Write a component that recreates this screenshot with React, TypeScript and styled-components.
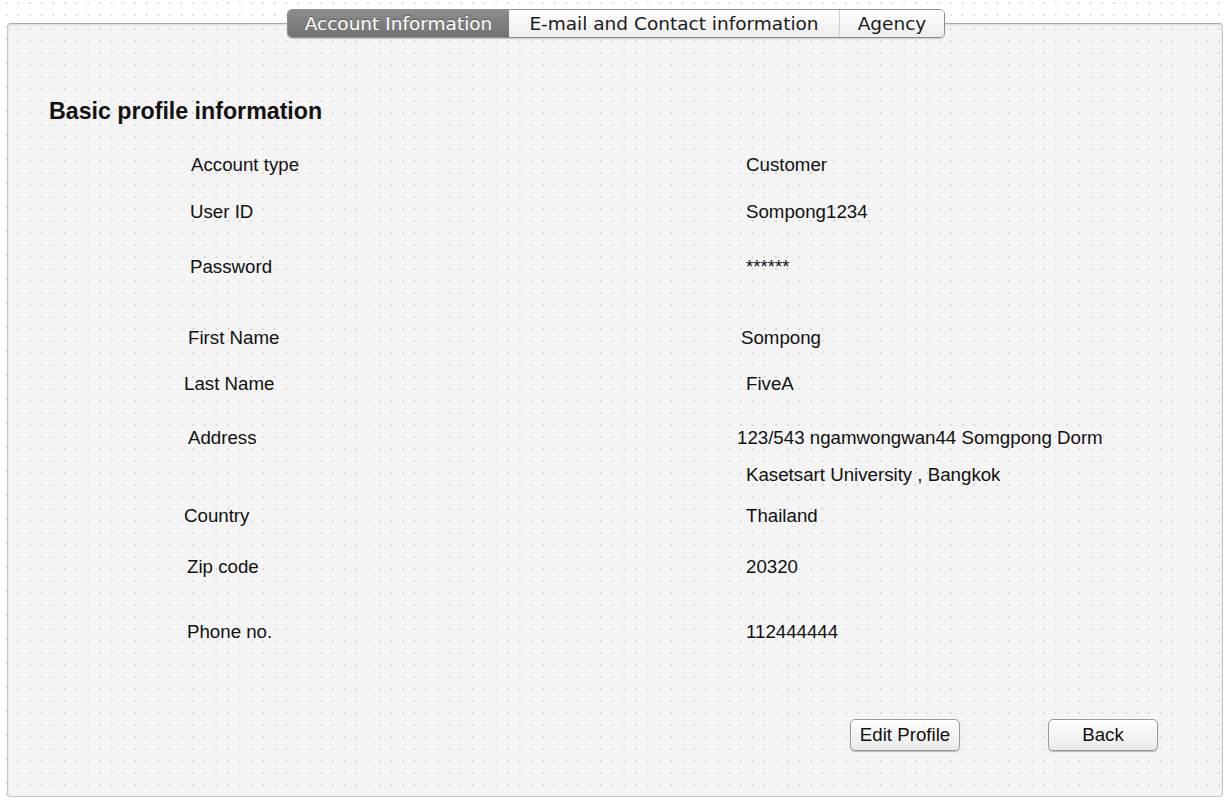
import React from "react";
import styled, { createGlobalStyle } from "styled-components";

const dots = (color: string) =>
  `radial-gradient(ellipse 0.7px 1.3px at 50% 50%, ${color} 0, ${color} 70%, transparent 100%)`;

const GlobalStyle = createGlobalStyle`
  html, body {
    margin: 0;
    padding: 0;
  }
  body {
    background-color: #ffffff;
    background-image: ${dots("#d2d2d2")};
    background-size: 11.67px 12px;
    background-position: 12.5px 9px;
    font-family: "Liberation Sans", Arial, Helvetica, sans-serif;
    color: #111;
  }
`;

const Page = styled.div`
  box-sizing: border-box;
  height: 800px;
  padding: 9px 5px 0 7px;
  display: flex;
  flex-direction: column;
`;

const TabBar = styled.div`
  position: relative;
  z-index: 1;
  align-self: center;
  margin-left: 2px;
  display: flex;
  height: 29px;
  margin-bottom: -15px;
  border: 1px solid #8f8f8f;
  border-radius: 5px;
  overflow: hidden;
  box-sizing: border-box;
  box-shadow: 0 1px 1px rgba(0, 0, 0, 0.18);
`;

const Tab = styled.div<{ $active?: boolean; $w: number; $sep?: boolean }>`
  width: ${(p) => p.$w}px;
  box-sizing: border-box;
  display: flex;
  align-items: center;
  justify-content: center;
  font-family: "DejaVu Sans", Verdana, sans-serif;
  font-size: 18.5px;
  letter-spacing: 0;
  border-left: ${(p) => (p.$sep ? "1px solid #cfcfcf" : "none")};
  color: ${(p) => (p.$active ? "#ffffff" : "#1a1a1a")};
  text-shadow: ${(p) => (p.$active ? "0 -1px 0 rgba(0,0,0,0.35)" : "none")};
  background: ${(p) =>
    p.$active
      ? "linear-gradient(#8c8c8c, #727272)"
      : "linear-gradient(#fefefe, #ededed)"};
`;

const Panel = styled.div`
  box-sizing: border-box;
  height: 774px;
  border: 1px solid #c6c6c6;
  border-top-color: #a8a8a8;
  border-radius: 4px;
  background-color: #f4f4f4;
  background-image: ${dots("#cdcdcd")};
  background-size: 11.67px 12px;
  background-position: 4.5px -1px;
  box-shadow: inset 0 1px 2px rgba(0, 0, 0, 0.12);
  display: flex;
  flex-direction: column;
  padding: 73px 64px 45px 41px;
`;

const Heading = styled.h2`
  margin: 0;
  font-size: 23.2px;
  line-height: 28px;
  font-weight: bold;
  color: #111;
`;

const Fields = styled.div`
  margin-top: 30px;
  display: flex;
  flex-direction: column;
`;

const Row = styled.div<{ $h: number }>`
  height: ${(p) => p.$h}px;
  display: grid;
  grid-template-columns: 559px 1fr;
  padding-left: 138px;
  font-size: 18.7px;
  line-height: 20px;
`;

const Label = styled.div<{ $dx?: number }>`
  margin-left: ${(p) => p.$dx ?? 0}px;
  white-space: nowrap;
`;

const Value = styled.div<{ $dx?: number }>`
  margin-left: ${(p) => p.$dx ?? 0}px;
  white-space: nowrap;
`;

const ButtonRow = styled.div`
  margin-top: auto;
  display: flex;
  justify-content: flex-end;
  gap: 88px;
`;

const Button = styled.button`
  width: 110px;
  height: 32px;
  box-sizing: border-box;
  border: 1px solid #9a9a9a;
  border-radius: 5px;
  background: linear-gradient(#ffffff, #e9e9e9);
  box-shadow: 0 1px 1px rgba(0, 0, 0, 0.25);
  font-family: "Liberation Sans", Arial, sans-serif;
  font-size: 18.7px;
  color: #111;
  padding: 0;
`;

type Field = { label: string; value: string; h: number; ldx?: number; vdx?: number };

const fields: Field[] = [
  { label: "Account type", value: "Customer", h: 46.5, ldx: 4 },
  { label: "User ID", value: "Sompong1234", h: 55, ldx: 3 },
  { label: "Password", value: "******", h: 71, ldx: 3 },
  { label: "First Name", value: "Sompong", h: 46, ldx: 1, vdx: -5 },
  { label: "Last Name", value: "FiveA", h: 54, ldx: -3 },
  { label: "Address", value: "123/543 ngamwongwan44 Somgpong Dorm", h: 37, ldx: 1, vdx: -9 },
  { label: "", value: "Kasetsart University , Bangkok", h: 41 },
  { label: "Country", value: "Thailand", h: 51, ldx: -3 },
  { label: "Zip code", value: "20320", h: 65 },
  { label: "Phone no.", value: "112444444", h: 20 },
];

export default function App() {
  return (
    <>
      <GlobalStyle />
      <Page>
        <TabBar>
          <Tab $active $w={221}>Account Information</Tab>
          <Tab $w={330}>E-mail and Contact information</Tab>
          <Tab $w={105} $sep>Agency</Tab>
        </TabBar>
        <Panel>
          <Heading>Basic profile information</Heading>
          <Fields>
            {fields.map((f, i) => (
              <Row key={i} $h={f.h}>
                <Label $dx={f.ldx}>{f.label}</Label>
                <Value $dx={f.vdx}>{f.value}</Value>
              </Row>
            ))}
          </Fields>
          <ButtonRow>
            <Button>Edit Profile</Button>
            <Button>Back</Button>
          </ButtonRow>
        </Panel>
      </Page>
    </>
  );
}
